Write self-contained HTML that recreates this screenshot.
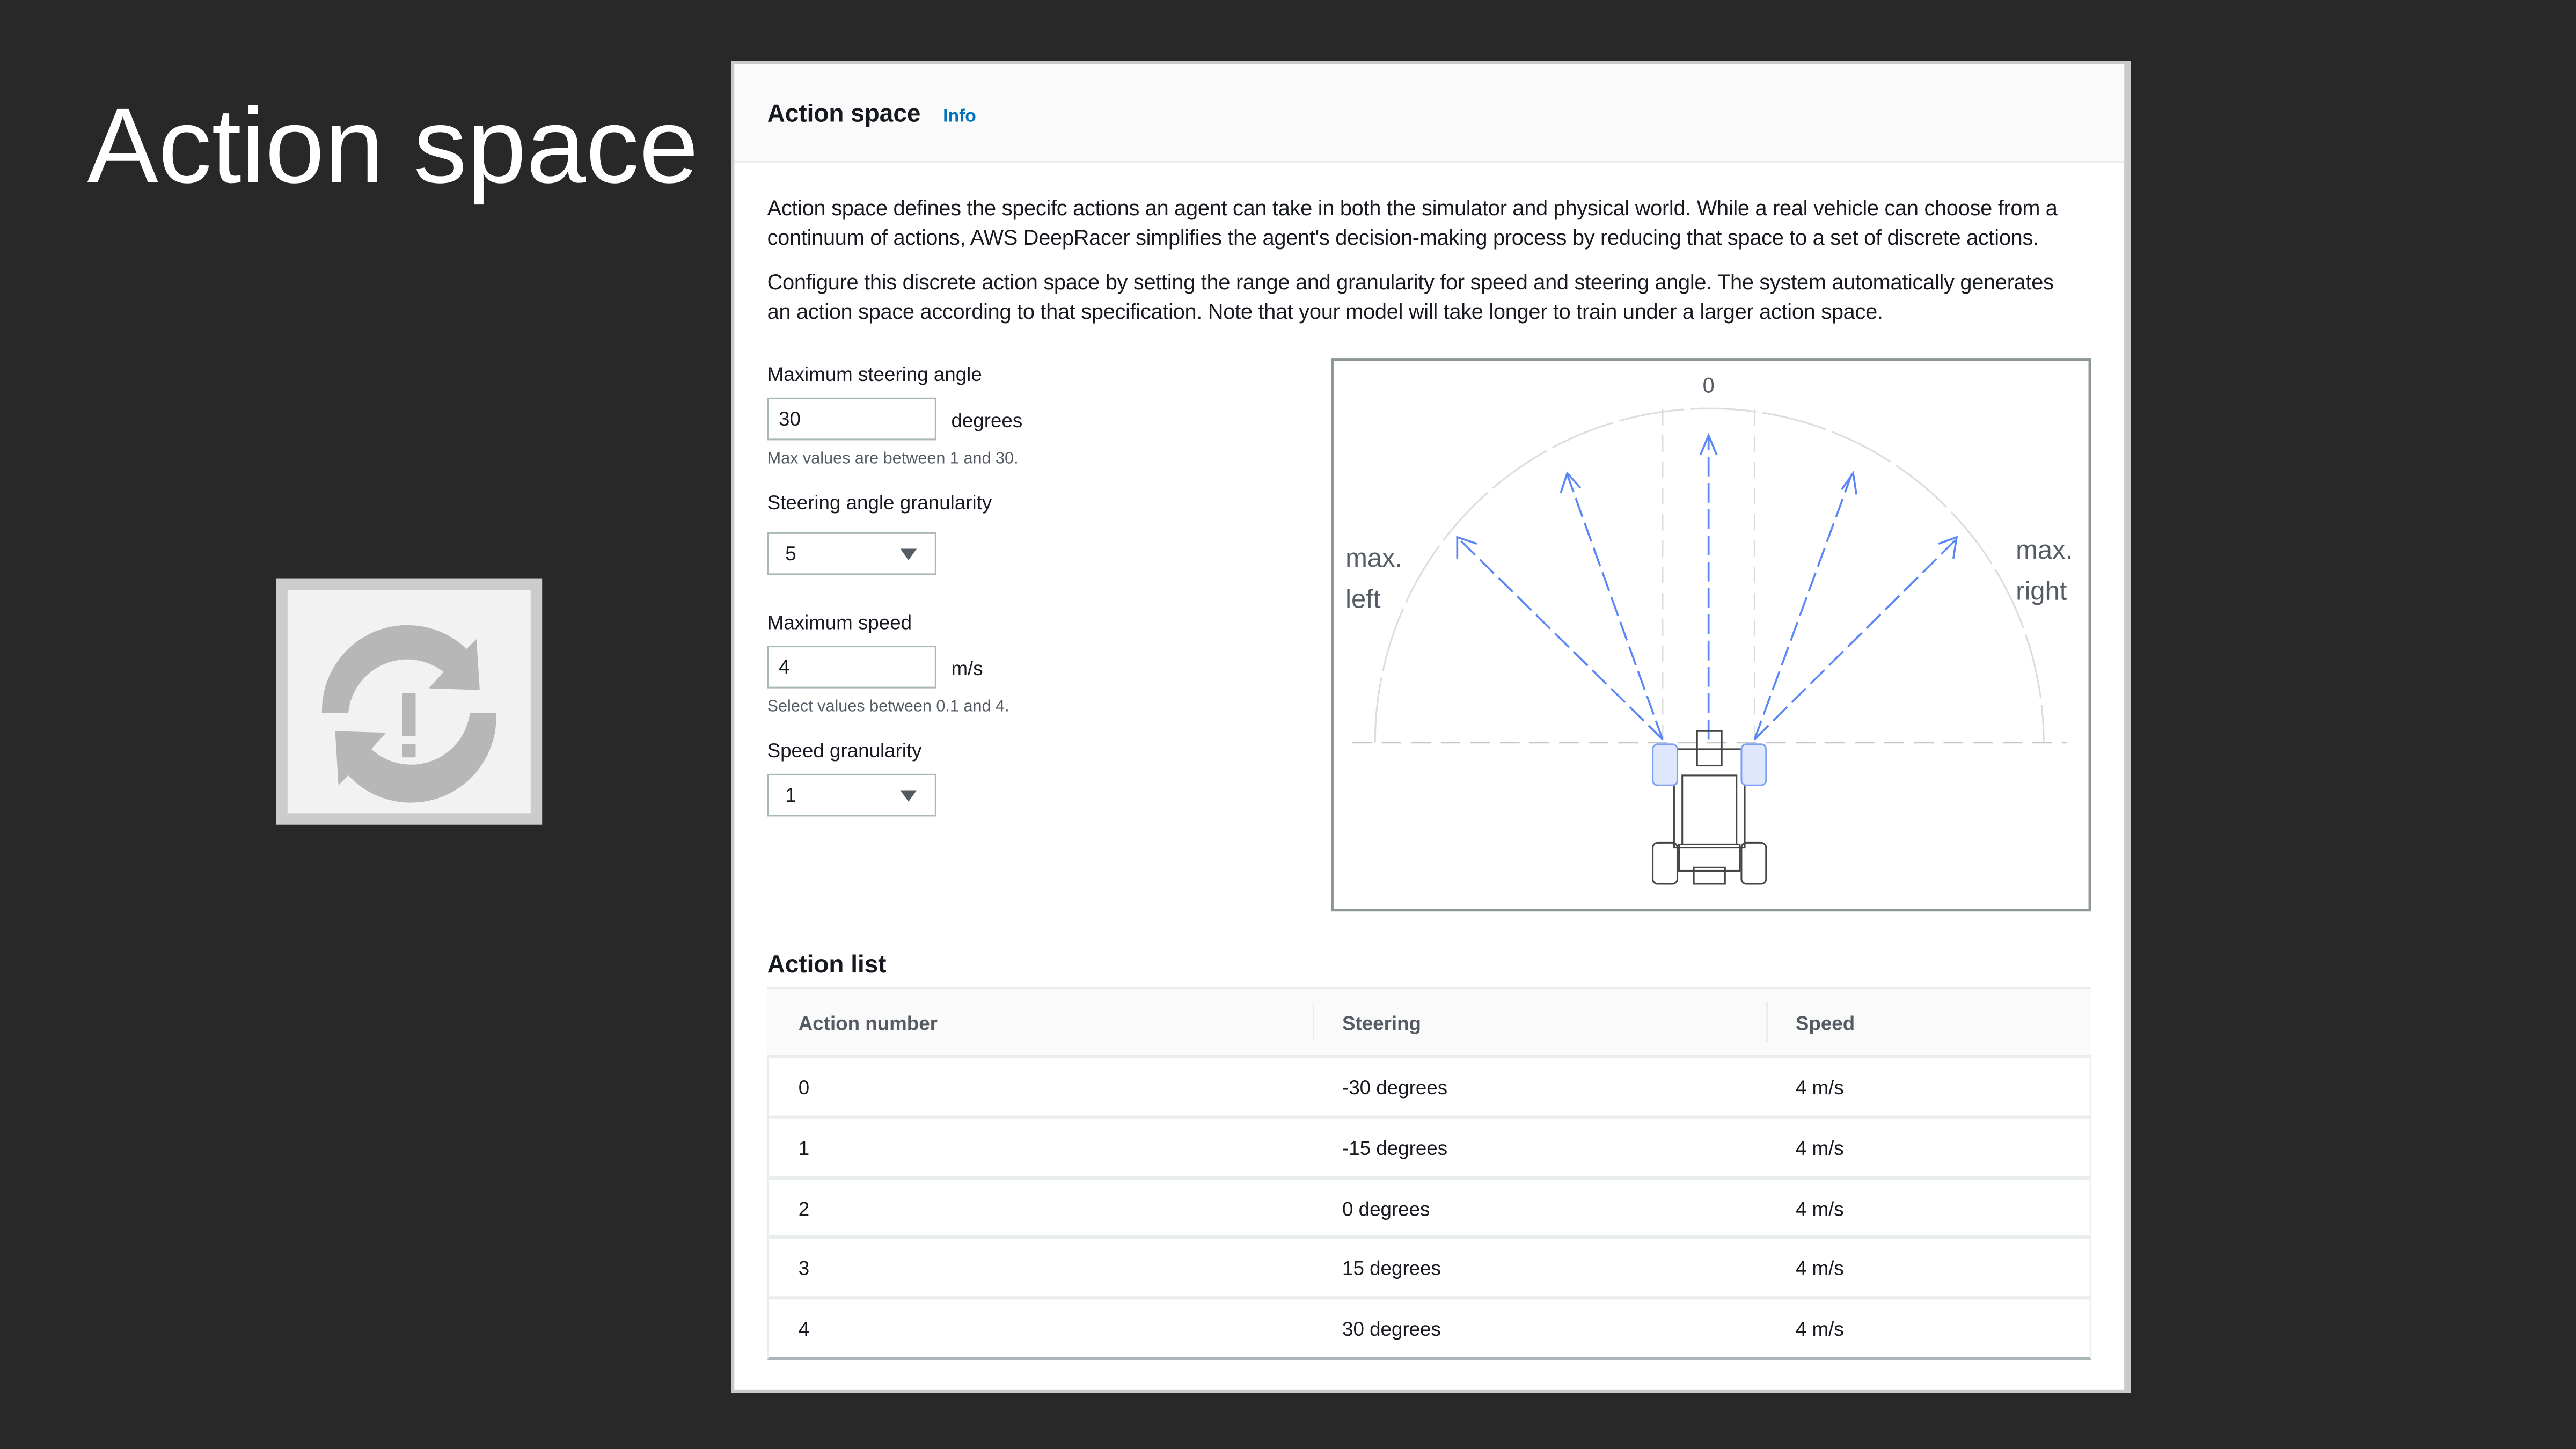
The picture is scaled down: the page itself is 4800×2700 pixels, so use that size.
<!DOCTYPE html>
<html><head><meta charset="utf-8"><style>
html,body{margin:0;padding:0;background:#282828;overflow:hidden}
body{width:4800px;height:2700px}
#w{position:absolute;left:0;top:0;width:1568px;height:882px;transform:scale(3.06122);transform-origin:0 0;font-family:"Liberation Sans",sans-serif;color:#16191f}
.a{position:absolute;white-space:nowrap}
.t{font-size:12px;color:#16191f}
.p{font-size:13px;color:#16191f;letter-spacing:-0.1px}
.s{font-size:10px;color:#545b64}
.inp{position:absolute;width:103px;height:26px;border:1px solid #aab7b8;background:#fff;box-sizing:border-box;font-size:12px;line-height:24px;padding-left:6px}
.tri{position:absolute;right:11px;top:9px;width:0;height:0;border-left:5px solid transparent;border-right:5px solid transparent;border-top:7px solid #545b64}
.row{position:absolute;left:467px;width:806px;height:36px;border-top:2px solid #eaeded;font-size:12px;color:#16191f}
.row span{position:absolute;top:11px}
</style></head><body><div id="w">
<div class="a" style="left:53px;top:51px;font-size:65px;color:#fff">Action space</div>

<div class="a" style="left:168px;top:352px;width:162px;height:150px;background:#ccc"></div>
<div class="a" style="left:175px;top:359px;width:148px;height:136px;background:#f2f2f2"></div>
<svg class="a" style="left:168px;top:352px" width="162" height="150" viewBox="0 0 162 150">
<path d="M28 82 A52 52 0 0 1 116 43 L122 37 L124 68 L93 67 L102 57 A36 36 0 0 0 44 82 Z" fill="#b7b7b7"/>
<path d="M134 82 A52 52 0 0 1 44 120 L38 126 L36 93 L67 94 L58 104 A36 36 0 0 0 118 82 Z" fill="#b7b7b7"/>
<rect x="77" y="70" width="8" height="26" fill="#b7b7b7"/><rect x="77" y="101" width="8" height="8" fill="#b7b7b7"/>
</svg>

<div class="a" style="left:445px;top:37px;width:852px;height:811px;background:#c8cbcb"></div>
<div class="a" style="left:447px;top:39px;width:846px;height:807px;background:#fff"></div>
<div class="a" style="left:447px;top:39px;width:846px;height:59px;background:#fafafa;border-bottom:1px solid #eaeded"></div>
<div class="a" style="left:467px;top:61px;font-size:15px;font-weight:bold">Action space</div>
<div class="a" style="left:574px;top:65px;font-size:11px;font-weight:bold;color:#0073bb">Info</div>

<div class="a p" style="left:467px;top:118px;line-height:18px">Action space defines the specifc actions an agent can take in both the simulator and physical world. While a real vehicle can choose from a<br>continuum of actions, AWS DeepRacer simplifies the agent's decision-making process by reducing that space to a set of discrete actions.</div>
<div class="a p" style="left:467px;top:163px;line-height:18px">Configure this discrete action space by setting the range and granularity for speed and steering angle. The system automatically generates<br>an action space according to that specification. Note that your model will take longer to train under a larger action space.</div>

<div class="a t" style="left:467px;top:221px">Maximum steering angle</div>
<div class="inp" style="left:467px;top:242px">30</div>
<div class="a t" style="left:579px;top:249px">degrees</div>
<div class="a s" style="left:467px;top:274px">Max values are between 1 and 30.</div>
<div class="a t" style="left:467px;top:299px">Steering angle granularity</div>
<div class="inp" style="left:467px;top:324px;padding-left:10px">5<div class="tri"></div></div>
<div class="a t" style="left:467px;top:372px">Maximum speed</div>
<div class="inp" style="left:467px;top:393px">4</div>
<div class="a t" style="left:579px;top:400px">m/s</div>
<div class="a s" style="left:467px;top:425px">Select values between 0.1 and 4.</div>
<div class="a t" style="left:467px;top:450px">Speed granularity</div>
<div class="inp" style="left:467px;top:471px;padding-left:10px">1<div class="tri"></div></div>

<svg class="a" style="left:810px;top:218px" width="464" height="338" viewBox="810 218 464 338">
<rect x="811" y="219" width="461" height="335" fill="#fff" stroke="#8d9696" stroke-width="1.5"/>
<path d="M837 452 A203 203 0 0 1 1244 452" fill="none" stroke="#dcdcdc" stroke-width="1" stroke-dasharray="40 4"/>
<line x1="823" y1="452" x2="1258" y2="452" stroke="#c4c8cc" stroke-width="1" stroke-dasharray="12 6"/>
<line x1="1012" y1="249" x2="1012" y2="452" stroke="#dcdcdc" stroke-dasharray="10 6"/>
<line x1="1068" y1="249" x2="1068" y2="452" stroke="#dcdcdc" stroke-dasharray="10 6"/>
<g stroke="#5b86f5" stroke-width="1.2" fill="none" stroke-dasharray="12 4">
<line x1="1040" y1="450" x2="1040" y2="266"/>
<line x1="1012" y1="450" x2="954" y2="289"/>
<line x1="1012" y1="450" x2="888" y2="328"/>
<line x1="1068" y1="450" x2="1127" y2="289"/>
<line x1="1068" y1="450" x2="1191" y2="328"/>
</g>
<g stroke="#5b86f5" stroke-width="1.2" fill="none">
<path d="M1035 277 L1040 265 L1045 277"/>
<path d="M950 300 L954 288 L962 297"/>
<path d="M887 340 L887 327 L899 331"/>
<path d="M1121 298 L1128 288 L1130 301"/>
<path d="M1180 331 L1191 327 L1189 340"/>
</g>
<g fill="none" stroke="#444" stroke-width="1">
<rect x="1033" y="445" width="15" height="21"/>
<rect x="1019" y="456" width="43" height="60"/>
<rect x="1024" y="472" width="33" height="42"/>
<rect x="1022" y="514" width="37" height="16"/>
<rect x="1031" y="528" width="19" height="10"/>
<rect x="1006" y="513" width="15" height="25" rx="3"/>
<rect x="1060" y="513" width="15" height="25" rx="3"/>
</g>
<rect x="1006" y="453" width="15" height="25" rx="3" fill="#dfe7fd" stroke="#7fa0f7"/>
<rect x="1060" y="453" width="15" height="25" rx="3" fill="#dfe7fd" stroke="#7fa0f7"/>
<text x="1040" y="239" font-size="13" fill="#545b64" text-anchor="middle" font-family="Liberation Sans">0</text>
<text x="819" y="345" font-size="16" fill="#545b64" font-family="Liberation Sans">max.</text>
<text x="819" y="370" font-size="16" fill="#545b64" font-family="Liberation Sans">left</text>
<text x="1227" y="340" font-size="16" fill="#545b64" font-family="Liberation Sans">max.</text>
<text x="1227" y="365" font-size="16" fill="#545b64" font-family="Liberation Sans">right</text>
</svg>

<div class="a" style="left:467px;top:579px;font-size:15px;font-weight:bold">Action list</div>
<div class="a" style="left:467px;top:601px;width:806px;height:227px;border:1px solid #eaeded;border-bottom:2px solid #aab7b8;box-sizing:border-box"></div>
<div class="a" style="left:467px;top:602px;width:806px;height:40px;background:#fafafa;font-size:12px;font-weight:bold;color:#545b64">
<span class="a" style="left:19px;top:14px">Action number</span>
<span class="a" style="left:332px;top:8px;width:1px;height:24px;background:#eaeded"></span>
<span class="a" style="left:350px;top:14px">Steering</span>
<span class="a" style="left:608px;top:8px;width:1px;height:24px;background:#eaeded"></span>
<span class="a" style="left:626px;top:14px">Speed</span></div>
<div class="row" style="top:642px"><span style="left:19px">0</span><span style="left:350px">-30 degrees</span><span style="left:626px">4 m/s</span></div>
<div class="row" style="top:679px"><span style="left:19px">1</span><span style="left:350px">-15 degrees</span><span style="left:626px">4 m/s</span></div>
<div class="row" style="top:716px"><span style="left:19px">2</span><span style="left:350px">0 degrees</span><span style="left:626px">4 m/s</span></div>
<div class="row" style="top:752px"><span style="left:19px">3</span><span style="left:350px">15 degrees</span><span style="left:626px">4 m/s</span></div>
<div class="row" style="top:789px"><span style="left:19px">4</span><span style="left:350px">30 degrees</span><span style="left:626px">4 m/s</span></div>
</div></body></html>
